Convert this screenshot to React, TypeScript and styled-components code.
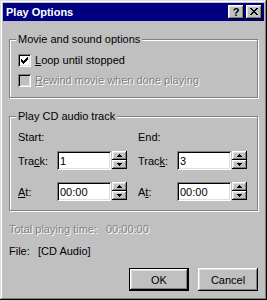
import React from "react";
import styled, { createGlobalStyle, css } from "styled-components";

const GlobalStyle = createGlobalStyle`
  html, body {
    margin: 0;
    padding: 0;
    background: #c0c0c0;
  }
  body {
    font-family: "Liberation Sans", Arial, sans-serif;
    font-size: 11px;
    -webkit-font-smoothing: none;
  }
`;

const raised = css`
  box-shadow: inset -1px -1px #000, inset 1px 1px #fff, inset -2px -2px #808080, inset 2px 2px #dfdfdf;
`;

const sunken = css`
  box-shadow: inset 1px 1px #808080, inset -1px -1px #fff, inset 2px 2px #000, inset -2px -2px #dfdfdf;
`;

const Window = styled.div`
  width: 267px;
  height: 300px;
  box-sizing: border-box;
  padding: 3px;
  background: #c0c0c0;
  box-shadow: inset -1px -1px #000, inset 1px 1px #dfdfdf, inset -2px -2px #808080, inset 2px 2px #fff;
  display: flex;
  flex-direction: column;
  color: #000;
`;

const TitleBar = styled.div`
  height: 18px;
  background: #000080;
  display: flex;
  align-items: center;
  padding: 0 2px 0 3px;
  gap: 2px;
`;

const Title = styled.div`
  flex: 1;
  color: #fff;
  font-weight: bold;
  font-size: 11px;
  line-height: 18px;
`;

const CaptionButton = styled.div`
  width: 16px;
  height: 14px;
  box-sizing: border-box;
  background: #c0c0c0;
  ${raised};
  display: flex;
  align-items: center;
  justify-content: center;
  font-weight: bold;
  font-size: 11px;
  line-height: 14px;
  padding-bottom: 1px;
`;

const Body = styled.div`
  padding: 0 6px;
  display: flex;
  flex-direction: column;
`;

const Group = styled.div<{ $top: number; $height: number }>`
  margin-top: ${(p) => p.$top}px;
  height: ${(p) => p.$height}px;
  box-sizing: border-box;
  border: 1px solid #808080;
  box-shadow: inset 1px 1px #fff, 1px 1px #fff;
  display: flex;
  flex-direction: column;
  padding: 0 0 0 8px;
`;

const Legend = styled.div`
  align-self: flex-start;
  margin: -7px 0 0 -2px;
  padding: 0 2px;
  background: #c0c0c0;
  line-height: 13px;
`;

const CheckRow = styled.div<{ $top: number }>`
  margin-top: ${(p) => p.$top}px;
  display: flex;
  align-items: center;
  gap: 4px;
  height: 13px;
  line-height: 13px;
`;

const Box = styled.div<{ $disabled?: boolean }>`
  width: 13px;
  height: 13px;
  box-sizing: border-box;
  background: ${(p) => (p.$disabled ? "#c0c0c0" : "#fff")};
  ${sunken};
  display: flex;
  align-items: center;
  justify-content: center;
`;

const Label = styled.span<{ $disabled?: boolean; $width?: number }>`
  white-space: nowrap;
  display: inline-block;
  ${(p) => p.$width && css`width: ${p.$width}px;`}
  ${(p) =>
    p.$disabled &&
    css`
      color: #808080;
      text-shadow: 1px 1px #fff;
    `}
`;

const Columns = styled.div`
  display: grid;
  grid-template-columns: 120px 120px;
  margin-top: 8px;
`;

const Column = styled.div`
  display: grid;
  grid-template-columns: 39px 54px 15px;
  grid-auto-rows: min-content;
`;

const Heading = styled.div`
  grid-column: 1 / 4;
  line-height: 13px;
  height: 13px;
  margin-bottom: 7px;
`;

const FieldLabel = styled.div`
  display: flex;
  align-items: center;
  height: 19px;
  white-space: nowrap;
`;

const Input = styled.div`
  height: 19px;
  width: 54px;
  box-sizing: border-box;
  background: #fff;
  ${sunken};
  padding: 0 3px;
  display: flex;
  align-items: center;
  margin-right: 1px;
`;

const Spin = styled.div`
  width: 15px;
  height: 18px;
  display: flex;
  flex-direction: column;
  margin-left: 1px;
`;

const SpinButton = styled.div`
  flex: 1;
  background: #c0c0c0;
  ${raised};
  display: flex;
  align-items: center;
  justify-content: center;
`;

const FieldGap = styled.div`
  grid-column: 1 / 4;
  height: 12px;
`;

const InfoRow = styled.div<{ $top: number }>`
  margin-top: ${(p) => p.$top}px;
  display: flex;
  line-height: 13px;
  white-space: nowrap;
`;

const Buttons = styled.div`
  margin-top: 10px;
  display: flex;
  justify-content: flex-end;
  gap: 9px;
`;

const Button = styled.div<{ $default?: boolean }>`
  width: 60px;
  height: 23px;
  box-sizing: border-box;
  background: #c0c0c0;
  display: flex;
  align-items: center;
  justify-content: center;
  ${(p) =>
    p.$default
      ? css`
          box-shadow: inset 0 0 0 1px #000, inset -2px -2px #000, inset 2px 2px #fff, inset -3px -3px #808080, inset 3px 3px #dfdfdf;
        `
      : raised}
`;

const Check = () => (
  <svg width="7" height="7" viewBox="0 0 7 7">
    <path d="M0 2h1v1h1v1h1V3h1V2h1V1h1V0h1v3H6v1H5v1H4v1H3v1H2V6H1V5H0z" fill="#000" />
  </svg>
);

const CloseIcon = () => (
  <svg width="8" height="7" viewBox="0 0 8 7" shapeRendering="crispEdges">
    <path d="M0 0h2v1h1v1h2V1h1V0h2v1H7v1H6v1H5v1h1v1h1v1h1v1H6V6H5V5H3v1H2v1H0V6h1V5h1V4h1V3H2V2H1V1H0z" fill="#000" />
  </svg>
);

const Arrow = ({ up }: { up?: boolean }) => (
  <svg width="5" height="3" viewBox="0 0 5 3" shapeRendering="crispEdges">
    <path d={up ? "M2 0h1v1h1v1h1v1H0V2h1V1h1z" : "M0 0h5v1H4v1H3v1H2V2H1V1H0z"} fill="#000" />
  </svg>
);

function Spinner() {
  return (
    <Spin>
      <SpinButton>
        <Arrow up />
      </SpinButton>
      <SpinButton>
        <Arrow />
      </SpinButton>
    </Spin>
  );
}

type Field = { label: React.ReactNode; value: string };

function TrackColumn({ heading, fields }: { heading: string; fields: Field[] }) {
  return (
    <Column>
      <Heading>{heading}</Heading>
      {fields.map((f, i) => (
        <React.Fragment key={i}>
          {i > 0 && <FieldGap />}
          <FieldLabel>{f.label}</FieldLabel>
          <Input>{f.value}</Input>
          <Spinner />
        </React.Fragment>
      ))}
    </Column>
  );
}

export default function App() {
  return (
    <>
      <GlobalStyle />
      <Window>
        <TitleBar>
          <Title>Play Options</Title>
          <CaptionButton>?</CaptionButton>
          <CaptionButton>
            <CloseIcon />
          </CaptionButton>
        </TitleBar>
        <Body>
          <Group $top={18} $height={59}>
            <Legend>Movie and sound options</Legend>
            <CheckRow $top={8}>
              <Box>
                <Check />
              </Box>
              <Label>
                <u>L</u>oop until stopped
              </Label>
            </CheckRow>
            <CheckRow $top={7}>
              <Box $disabled />
              <Label $disabled>
                <u>R</u>ewind movie when done playing
              </Label>
            </CheckRow>
          </Group>

          <Group $top={18} $height={95}>
            <Legend>Play CD audio track</Legend>
            <Columns>
              <TrackColumn
                heading="Start:"
                fields={[
                  { label: <>Tra<u>c</u>k:</>, value: "1" },
                  { label: <><u>A</u>t:</>, value: "00:00" },
                ]}
              />
              <TrackColumn
                heading="End:"
                fields={[
                  { label: <>Trac<u>k</u>:</>, value: "3" },
                  { label: <>A<u>t</u>:</>, value: "00:00" },
                ]}
              />
            </Columns>
          </Group>

          <InfoRow $top={12}>
            <Label $disabled $width={97}>Total playing time:</Label>
            <Label $disabled>00:00:00</Label>
          </InfoRow>
          <InfoRow $top={9}>
            <Label $width={29}>File:</Label>
            <Label>[CD Audio]</Label>
          </InfoRow>

          <Buttons>
            <Button $default>OK</Button>
            <Button>Cancel</Button>
          </Buttons>
        </Body>
      </Window>
    </>
  );
}
